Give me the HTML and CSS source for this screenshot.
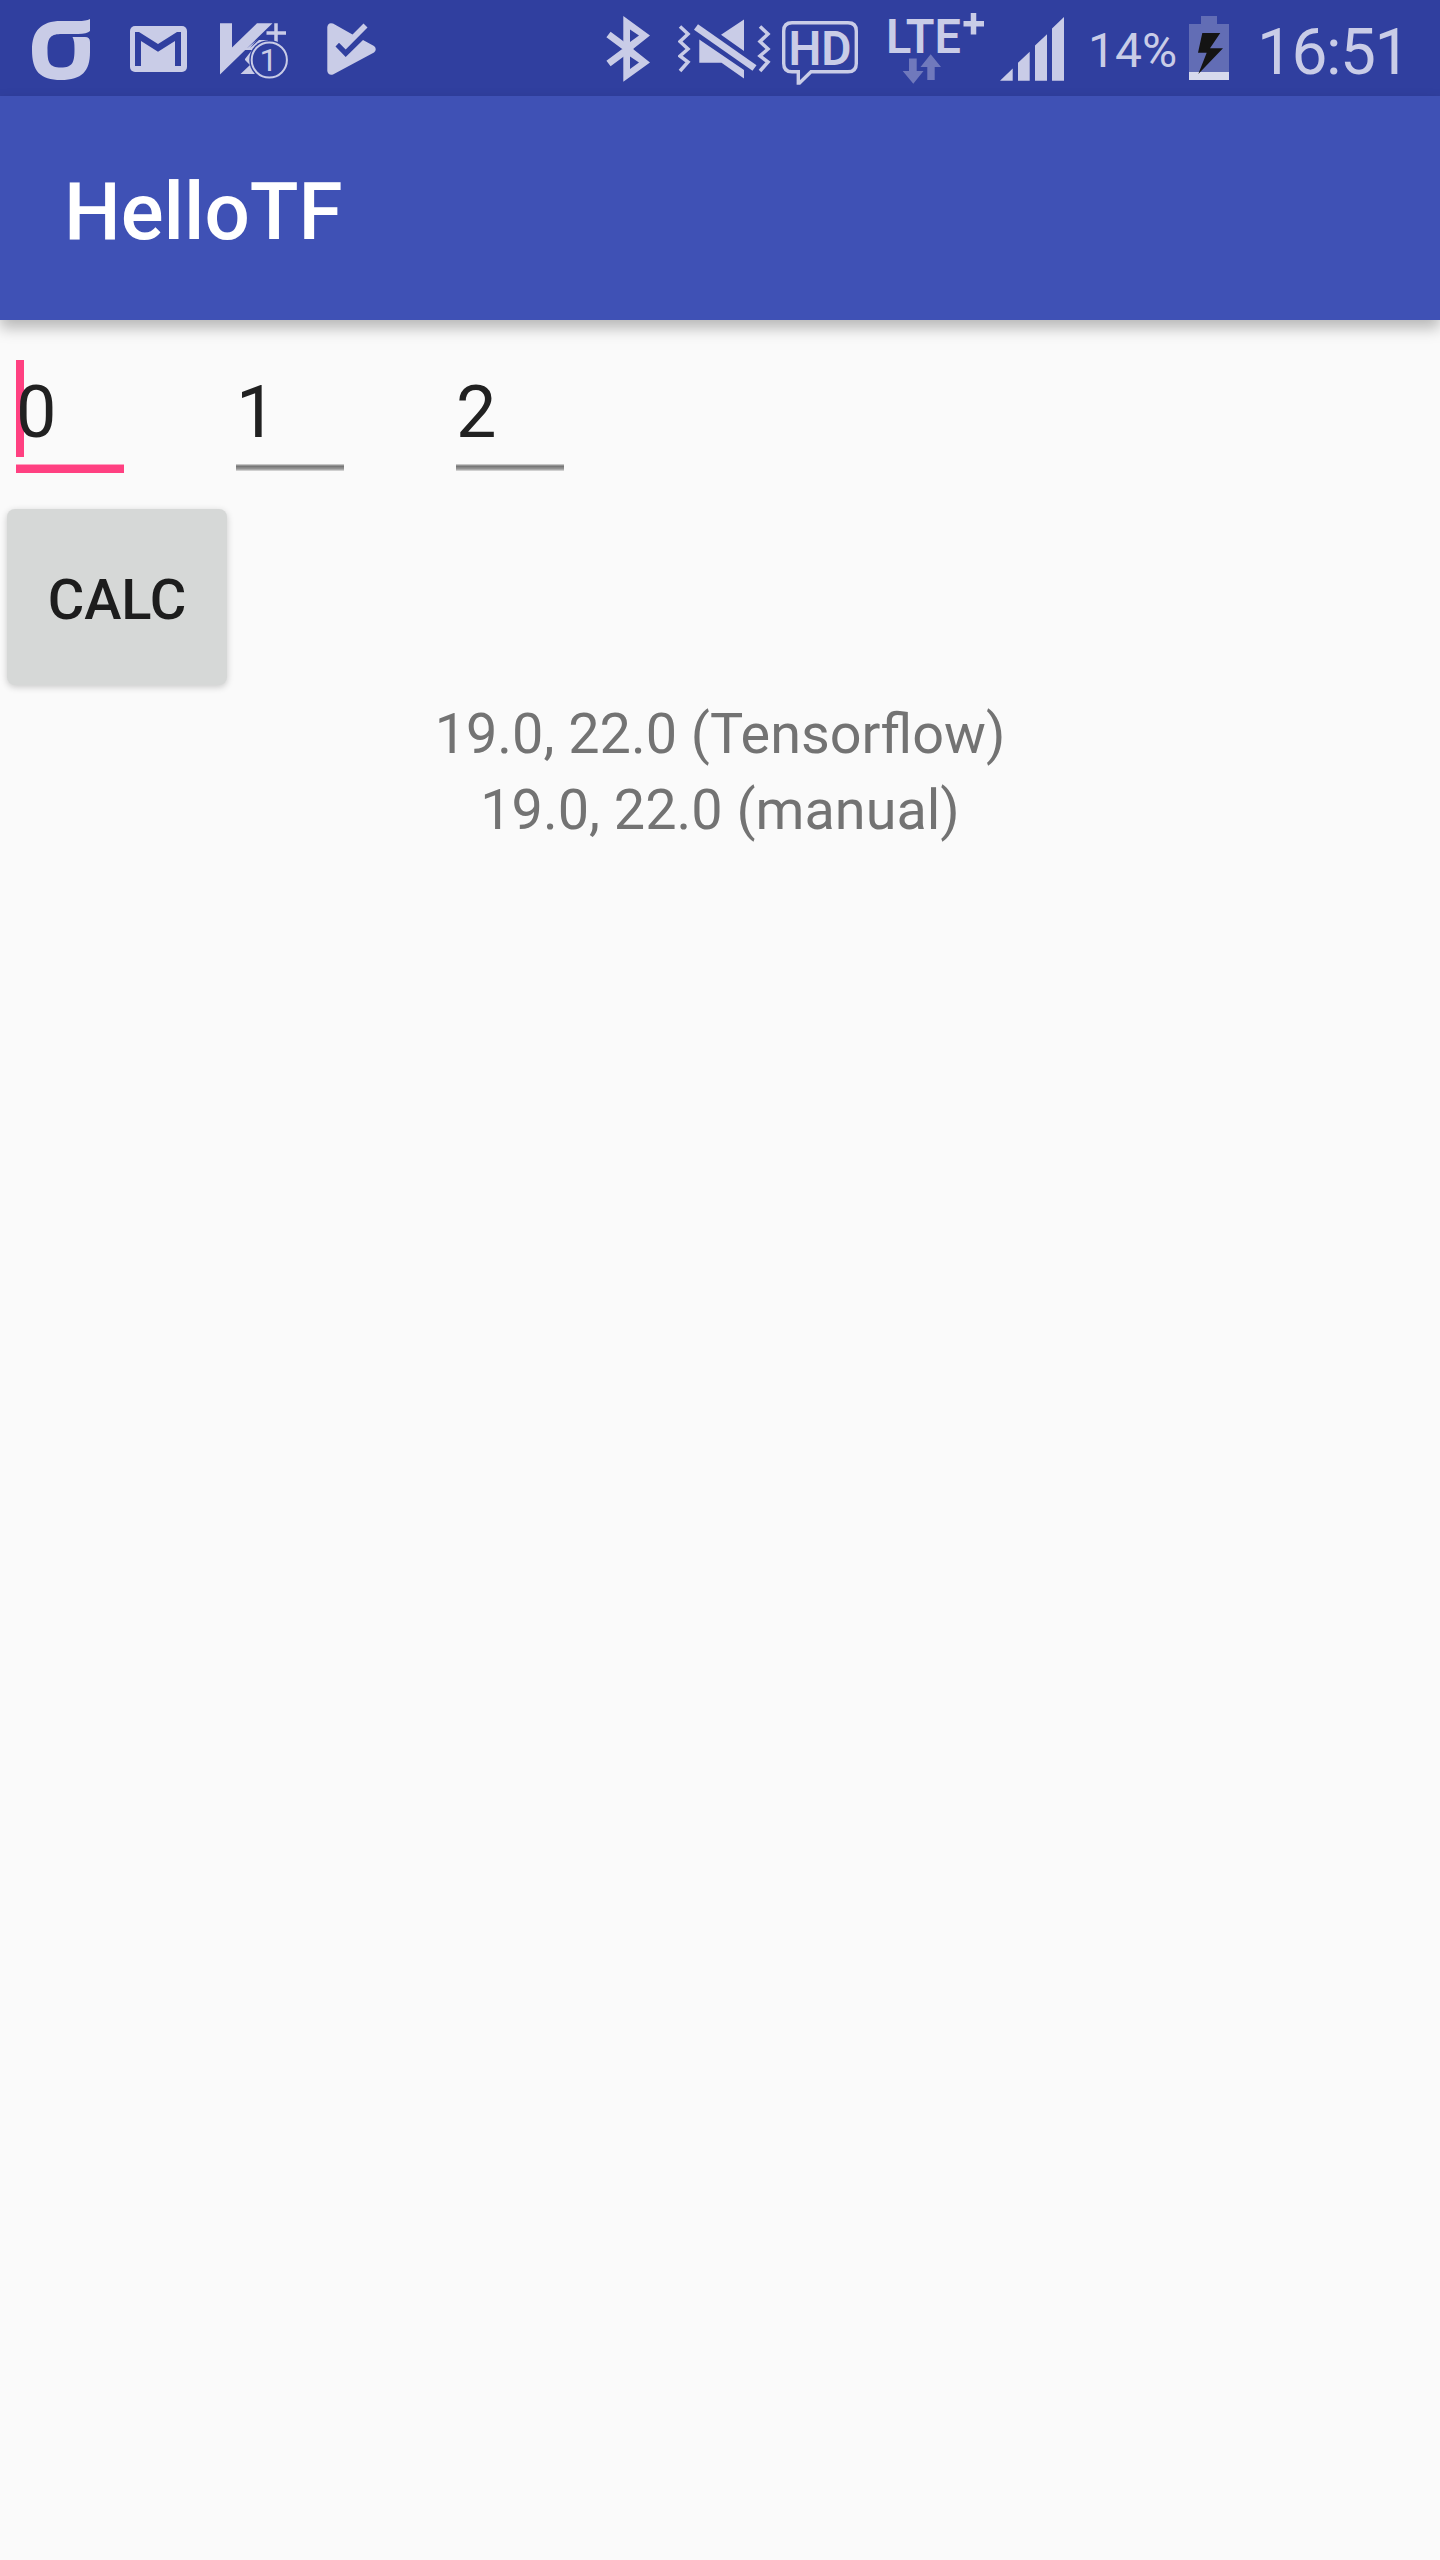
FILE: index.html
```html
<!DOCTYPE html>
<html lang="en">
<head>
<meta charset="utf-8">
<title>HelloTF</title>
<link rel="stylesheet" href="styles.css">
</head>
<body>
<header class="status-bar">
  <div class="notifications">
    <svg width="58" height="96" viewBox="32 0 58 96"><path d="M90 19Q86 21 78 21H61C41 21 32 31 32 50C32 71 40 80 61 80C82 80 90 71 90 52V42Q90 37 85 37H72.500Q74.500 40 74.500 49C74.500 62 73 67.500 61 67.500C49 67.500 47.500 62 47.500 50C47.500 37 51 34 62 34H78Q87 34 90 31Z"/></svg>
    <svg width="57" height="96" viewBox="130 0 57 96"><rect x="130" y="26" width="57" height="46" rx="5"/><path class="cut" d="M135 66V32H139L158 44L177 32H181V66H175V41L158 51.700L141 41V66Z"/></svg>
    <svg width="68" height="96" viewBox="220 0 68 96"><path d="M220 23.300H232V47.500L257 23.300H272.500L220 74.500ZM245 59L252 50H245L258 39H268V74H240.500L250 65L245 60Z"/><path class="cut" d="M250 48L259 40H290V36H260Z"/><path d="M276 23.300V42M266.500 33H286" class="line plus"/><circle class="cut" cx="269.300" cy="60" r="20"/><circle class="line ring" cx="269.300" cy="60" r="17.600"/><text x="259.500" y="70.500" class="badge">1</text></svg>
    <svg width="49" height="96" viewBox="327 0 49 96"><path d="M327.300 27Q328 22 333 23.500L352.500 34.600L363.500 23.500L367.500 27.500L345.700 49.500L339 42.800L335.500 46.500L345.700 57L363 40L374 46Q377.500 49 374 52.500L333 74.500Q328 75.500 327.300 71Z"/></svg>
  </div>
  <div class="indicators">
    <svg width="45" height="96" viewBox="606 0 45 96"><path fill-rule="evenodd" d="M623.300 16L650 35.500L633 49L650 62.500L623.300 81.700ZM630 29.500V42L639 35.500ZM630 56.500V69L639 62.500Z"/><path class="line arm" d="M608.500 34.500L628 49L608.500 63.500"/></svg>
    <svg width="93" height="96" viewBox="678 0 93 96"><path class="line zig" d="M680 26.500L688 34L680 41.500L688 49L680 56L688 62L680 71M760 26.500L768 34L760 41.500L768 49L760 56L768 62L760 71"/><path class="line slash" d="M696 27L754.500 68"/><path d="M744 19.500V51L721 34.700ZM699.300 39.500V62.700H721.500L744 78.500V70Z"/></svg>
    <svg width="76" height="96" viewBox="782 0 76 96"><path class="line bubble" d="M792 22.800H848Q856.300 22.800 856.300 31V63.500Q856.300 71.800 848 71.800H811L799.500 83H798.300V71.800H792Q783.700 71.800 783.700 63.500V31Q783.700 22.800 792 22.800Z"/><text class="label" x="788.500" y="65" textLength="63" lengthAdjust="spacingAndGlyphs">HD</text></svg>
    <svg width="104" height="96" viewBox="880 0 104 96"><text class="label" x="886" y="53" textLength="75" lengthAdjust="spacingAndGlyphs">LTE</text><path d="M973.500 13V34.500M963.500 23.700H984" class="line thick"/><path class="traffic" d="M909 58.500H916.700V71H923.500L913.300 83.700L902.700 71H909ZM930.700 54.300L941 67H934.700V80H927.300V67H920.500Z"/></svg>
    <svg width="64" height="96" viewBox="1000 0 64 96"><path d="M1000 80.800L1012.700 68.500V80.800ZM1018 80.800V62.700L1029.700 51.700V80.800ZM1035 80.800V45.500L1047 34.200V80.800ZM1052 80.800V28.500L1064 17V80.800Z"/></svg>
    <span class="percent">14%</span>
    <svg width="40" height="96" viewBox="1189 0 40 96"><path class="battery" d="M1201 16H1217V24H1229V72H1189V24H1201Z"/><path class="charge" d="M1189 72H1229V80H1189Z"/><path class="bolt" d="M1202.300 33H1220.300L1210 48.300H1223L1198.300 74L1206.700 52.700H1198Z"/></svg>
    <time class="clock">16:51</time>
  </div>
</header>
<div class="toolbar"><h1>HelloTF</h1></div>
<main>
  <div class="fields">
    <div class="field focused">0</div>
    <div class="field">1</div>
    <div class="field">2</div>
  </div>
  <button class="calc" type="button">CALC</button>
  <p class="result">19.0, 22.0 (Tensorflow)<br>19.0, 22.0 (manual)</p>
</main>
</body>
</html>
```
FILE: styles.css
```css
* { box-sizing: border-box; }
body {
  margin: 0;
  min-height: 2560px;
  background: #fafafa;
  font-family: Roboto, "Liberation Sans", sans-serif;
}
svg { display: block; fill: #c9cce7; flex: none; }
.status-bar {
  display: flex;
  justify-content: space-between;
  height: 96px;
  padding: 0 32px;
  background: #303f9f;
  color: #c9cce7;
}
.notifications, .indicators { display: flex; }
.notifications svg:nth-child(2) { margin-left: 40px; }
.notifications svg:nth-child(3) { margin-left: 33px; }
.notifications svg:nth-child(4) { margin-left: 39px; }
.indicators { width: 802px; }
.indicators svg:nth-child(2) { margin-left: 27px; }
.indicators svg:nth-child(3) { margin-left: 11px; }
.indicators svg:nth-child(4) { margin-left: 22px; }
.indicators svg:nth-child(5) { margin-left: 16px; }
.cut { fill: #303f9f; }
.line { fill: none; stroke: #c9cce7; }
.plus { stroke-width: 3.5px; }
.ring { stroke-width: 2px; }
.arm { stroke-width: 7px; }
.zig { stroke-width: 3.5px; }
.slash { stroke-width: 7px; }
.bubble { stroke-width: 3.4px; }
.thick { stroke-width: 5.5px; }
.badge { font-size: 32px; }
.label { font-size: 48px; font-weight: 600; }
.traffic { fill: #7079bc; }
.battery { fill: #626db5; }
.charge { fill: #d7daed; }
.bolt { fill: #141414; }
.percent {
  width: 98px;
  margin-left: 24px;
  padding-top: 3px;
  font-size: 48px;
  line-height: 96px;
  flex: none;
}
.indicators .percent + svg { margin-left: 3px; }
.clock {
  margin-left: 28px;
  padding-top: 5px;
  font-size: 64px;
  line-height: 96px;
  letter-spacing: -1.5px;
  flex: none;
}
.toolbar {
  height: 224px;
  padding: 4px 64px 0;
  background: #3f51b5;
  box-shadow: 0 8px 14px rgba(0, 0, 0, .27);
}
h1 {
  margin: 0;
  color: #fff;
  font-size: 80px;
  font-weight: 500;
  line-height: 224px;
}
main { padding: 40px 0 0; }
.fields { display: flex; gap: 112px; height: 149px; padding-left: 16px; }
.field {
  width: 108px;
  height: 113px;
  color: #212121;
  font-size: 72px;
  line-height: 106px;
  background: linear-gradient(#c5c5c5 0 1px, #929292 1px 2px, #777 2px 3px, #868686 3px 4px, #929292 4px 5px, #aaa 5px 6px, #cfcfcf 6px 7px) 0 104px / 100% 7px no-repeat;
}
.focused {
  background:
    linear-gradient(#ff4081, #ff4081) 0 0 / 8px 97px no-repeat,
    linear-gradient(#ff9fbf 0 1px, #ff4081 1px) 0 104px / 100% 9px no-repeat;
}
.calc {
  display: block;
  width: 220px;
  height: 176px;
  margin-left: 7px;
  padding: 6px 0 0;
  border: 0;
  border-radius: 8px;
  background: #d6d8d7;
  box-shadow: 0 2px 7px rgba(0, 0, 0, .2);
  color: #1d1d1d;
  font: 500 56px/64px Roboto, sans-serif;
}
.result {
  margin: 11px 0 0;
  color: #737373;
  font-size: 55.8px;
  line-height: 76px;
  text-align: center;
}
```
